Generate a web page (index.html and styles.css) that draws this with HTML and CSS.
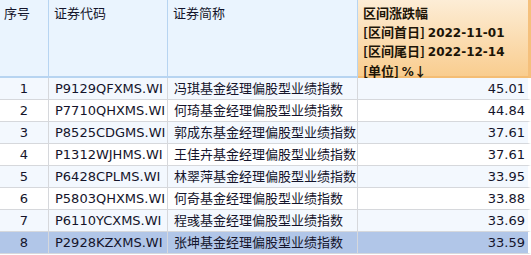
FILE: index.html
```html
<!DOCTYPE html>
<html>
<head>
<meta charset="utf-8">
<link rel="stylesheet" href="styles.css">
</head>
<body>
<div class="grid">
  <div class="hd c1">序号</div>
  <div class="hd c2">证券代码</div>
  <div class="hd c3">证券简称</div>
  <div class="hd c4 hot">
    <div>区间涨跌幅</div>
    <div>[区间首日] <span class="lat">2022-11-01</span></div>
    <div>[区间尾日] <span class="lat">2022-12-14</span></div>
    <div>[单位] <span class="lat">%</span>↓</div>
  </div>

  <div class="row odd"><span class="num">1</span><span>P9129QFXMS.WI</span><span>冯琪基金经理偏股型业绩指数</span><span class="val">45.01</span></div>
  <div class="row"><span class="num">2</span><span>P7710QHXMS.WI</span><span>何琦基金经理偏股型业绩指数</span><span class="val">44.84</span></div>
  <div class="row odd"><span class="num">3</span><span>P8525CDGMS.WI</span><span>郭成东基金经理偏股型业绩指数</span><span class="val">37.61</span></div>
  <div class="row"><span class="num">4</span><span>P1312WJHMS.WI</span><span>王佳卉基金经理偏股型业绩指数</span><span class="val">37.61</span></div>
  <div class="row odd"><span class="num">5</span><span>P6428CPLMS.WI</span><span>林翠萍基金经理偏股型业绩指数</span><span class="val">33.95</span></div>
  <div class="row"><span class="num">6</span><span>P5803QHXMS.WI</span><span>何奇基金经理偏股型业绩指数</span><span class="val">33.88</span></div>
  <div class="row odd"><span class="num">7</span><span>P6110YCXMS.WI</span><span>程彧基金经理偏股型业绩指数</span><span class="val">33.69</span></div>
  <div class="row sel"><span class="num">8</span><span>P2928KZXMS.WI</span><span>张坤基金经理偏股型业绩指数</span><span class="val">33.59</span></div>
</div>
</body>
</html>
```
FILE: styles.css
```css
html, body {
  margin: 0;
  padding: 0;
  background: #ffffff;
}
body {
  font-family: "DejaVu Sans", "Noto Sans CJK SC", sans-serif;
  font-size: 13px;
  color: #14142b;
  width: 531px;
  height: 255px;
  overflow: hidden;
}
.grid {
  display: grid;
  grid-template-columns: 49px 119px 190px 173px;
}
.hd {
  height: 76px;
  background: #eaf4fe;
  border-right: 1px solid #b7d4f1;
  border-bottom: 2px solid #b7d4f1;
  padding: 4px 0 0 5px;
  line-height: 18.5px;
  box-sizing: content-box;
  font-family: "Noto Sans CJK SC", sans-serif;
}
.hd.c1 { padding-left: 4px; height: 72px; }
.hd.c2, .hd.c3 { height: 72px; }
.hd.c1 { width: 44px; }
.hd.c2 { width: 113px; }
.hd.c3 { width: 184px; }
.hot {
  background: linear-gradient(#fdedd6, #f9cd8f);
  font-weight: bold;
  color: #1c1406;
  border-right: 3px solid #f5c07c;
  height: 72px;
  width: 165px;
  padding-left: 5px;
  border-bottom-color: #f4bd74;
}
.hot .lat {
  font-family: "DejaVu Sans", sans-serif;
  font-size: 12px;
}
.row {
  display: contents;
}
.row > span {
  height: 21px;
  line-height: 21px;
  border-bottom: 1px solid #d6d8dc;
  border-right: 1px solid #d6d8dc;
  padding: 0 0 0 6px;
  white-space: nowrap;
  overflow: hidden;
  background: #ffffff;
}
.row.odd > span { background: #f3f8fe; }
.row > span.num {
  text-align: center;
  padding: 0;
}
.row > span.val {
  text-align: right;
  padding: 0 3px 0 0;
  border-right: 3px solid #ffffff;
}
.row.sel > span {
  background: #b1c6e8;
}
```
